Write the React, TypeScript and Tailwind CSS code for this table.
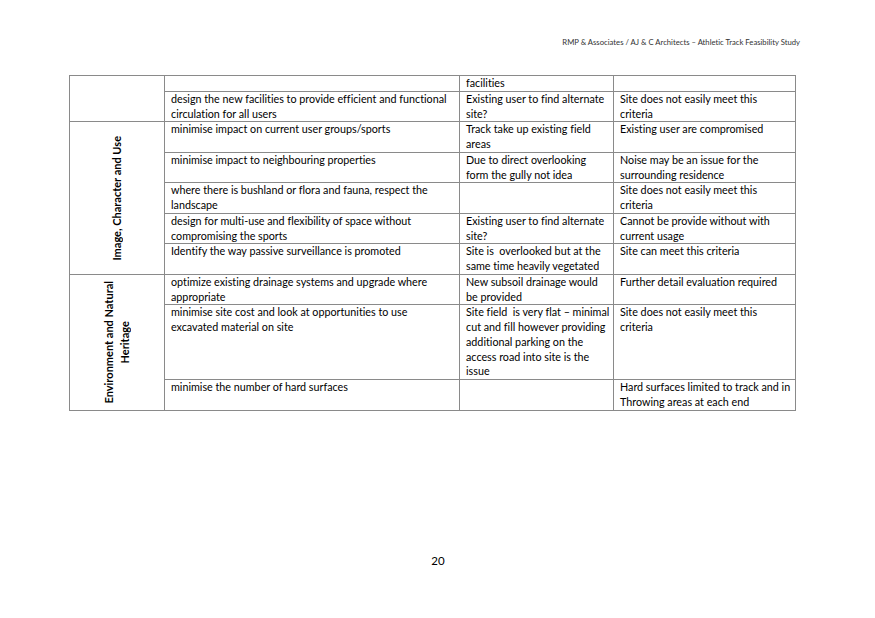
import React from "react";

type Row = { a: string[]; b: string[]; c: string[] };

const group0: Row[] = [
  { a: [], b: ["facilities"], c: [] },
  {
    a: ["design the new facilities to provide efficient and functional", "circulation for all users"],
    b: ["Existing user to find alternate", "site?"],
    c: ["Site does not easily meet this", "criteria"],
  },
];

const group1: Row[] = [
  {
    a: ["minimise impact on current user groups/sports"],
    b: ["Track take up existing field", "areas"],
    c: ["Existing user are compromised"],
  },
  {
    a: ["minimise impact to neighbouring properties"],
    b: ["Due to direct overlooking", "form the gully not idea"],
    c: ["Noise may be an issue for the", "surrounding residence"],
  },
  {
    a: ["where there is bushland or flora and fauna, respect the", "landscape"],
    b: [],
    c: ["Site does not easily meet this", "criteria"],
  },
  {
    a: ["design for multi-use and flexibility of space without", "compromising the sports"],
    b: ["Existing user to find alternate", "site?"],
    c: ["Cannot be provide without with", "current usage"],
  },
  {
    a: ["Identify the way passive surveillance is promoted"],
    b: ["Site is  overlooked but at the", "same time heavily vegetated"],
    c: ["Site can meet this criteria"],
  },
];

const group2: Row[] = [
  {
    a: ["optimize existing drainage systems and upgrade where", "appropriate"],
    b: ["New subsoil drainage would", "be provided"],
    c: ["Further detail evaluation required"],
  },
  {
    a: ["minimise site cost and look at opportunities to use", "excavated material on site"],
    b: [
      "Site field  is very flat \u2013 minimal",
      "cut and fill however providing",
      "additional parking on the",
      "access road into site is the",
      "issue",
    ],
    c: ["Site does not easily meet this", "criteria"],
  },
  {
    a: ["minimise the number of hard surfaces"],
    b: [],
    c: ["Hard surfaces limited to track and in", "Throwing areas at each end"],
  },
];

const rowLines = (r: Row) => Math.max(r.a.length, r.b.length, r.c.length, 1);

function Lines({ lines, n }: { lines: string[]; n: number }) {
  const out: React.ReactNode[] = [];
  for (let i = 0; i < n; i++) {
    out.push(
      <div key={i} className="h-[14.75px] whitespace-pre">
        {lines[i] ?? "\u00a0"}
      </div>
    );
  }
  return <>{out}</>;
}

const td = "border border-[#8a8a8a] align-top pl-[6px] pr-[2px] py-0";

function Group({ rows, label }: { rows: Row[]; label: React.ReactNode }) {
  return (
    <>
      {rows.map((r, i) => {
        const n = rowLines(r);
        return (
          <tr key={i}>
            {i === 0 && (
              <td rowSpan={rows.length} className="border border-[#8a8a8a] align-middle p-0">
                <div className="flex items-center justify-center">
                  <div className="[writing-mode:vertical-rl] rotate-180 text-center font-bold text-[11px] leading-[16px]">
                    {label}
                  </div>
                </div>
              </td>
            )}
            <td className={td}>
              <Lines lines={r.a} n={n} />
            </td>
            <td className={td}>
              <Lines lines={r.b} n={n} />
            </td>
            <td className={td}>
              <Lines lines={r.c} n={n} />
            </td>
          </tr>
        );
      })}
    </>
  );
}

export default function App() {
  return (
    <div
      className="w-[875px] h-[618px] bg-white text-black flex flex-col [font-variant-ligatures:none]"
      style={{ fontFamily: "Lato, 'Open Sans', sans-serif" }}
    >
      <div className="pt-[37px] pr-[75px] text-right text-[7.7px] leading-[10px] text-[#333]">
        RMP &amp; Associates / AJ &amp; C Architects – Athletic Track Feasibility Study
      </div>
      <table className="ml-[69px] mt-[28px] border-collapse table-fixed w-[726px] text-[10.75px] leading-[14.75px]">
        <colgroup>
          <col className="w-[95px]" />
          <col className="w-[295px]" />
          <col className="w-[154px]" />
          <col className="w-[182px]" />
        </colgroup>
        <tbody>
          <Group rows={group0} label={null} />
          <Group rows={group1} label={<span>Image, Character and Use</span>} />
          <Group
            rows={group2}
            label={
              <>
                Environment and Natural
                <br />
                Heritage
              </>
            }
          />
        </tbody>
      </table>
      <div className="flex-1" />
      <div className="pb-[50px] text-center text-[11.5px] leading-[14px] pl-[1px]">20</div>
    </div>
  );
}
